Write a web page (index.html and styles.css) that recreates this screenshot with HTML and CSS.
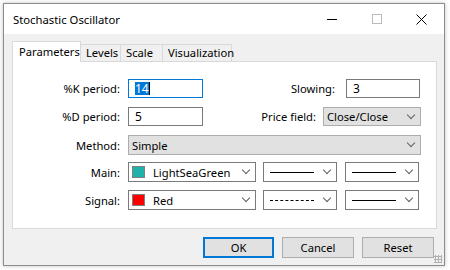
FILE: index.html
```html
<!DOCTYPE html>
<html lang="en">
<head>
    <meta charset="UTF-8">
    <title>Stochastic Oscillator</title>
    <link rel="stylesheet" href="styles.css">
</head>
<body>
    <!-- Dialog window -->
    <div class="dialog">
        <div class="titlebar">
            <span class="title">Stochastic Oscillator</span>
            <div class="win-btn">
                <svg width="10" height="10" viewBox="0 0 10 10"><line x1="0" y1="5.5" x2="10" y2="5.5" stroke="#000" stroke-width="1"/></svg>
            </div>
            <div class="win-btn">
                <svg width="10" height="10" viewBox="0 0 10 10"><rect x="0.5" y="0.5" width="9" height="9" fill="none" stroke="#bbb" stroke-width="1"/></svg>
            </div>
            <div class="win-btn close">
                <svg width="11" height="11" viewBox="0 0 11 11"><path d="M0.5 0.5 L10.5 10.5 M10.5 0.5 L0.5 10.5" stroke="#000" stroke-width="1"/></svg>
            </div>
        </div>

        <div class="content">
            <!-- Tabs -->
            <div class="tabs">
                <div class="tab active">Parameters</div>
                <div class="tab tab-levels">Levels</div>
                <div class="tab tab-scale">Scale</div>
                <div class="tab tab-vis">Visualization</div>
            </div>

            <div class="panel">
                <div class="row">
                    <label class="lbl">%K period:</label>
                    <div class="field focus w75"><span class="sel">14</span><span class="caret"></span></div>
                    <label class="lbl2 slow">Slowing:</label>
                    <div class="field w74">3</div>
                </div>

                <div class="row">
                    <label class="lbl">%D period:</label>
                    <div class="field w75">5</div>
                    <label class="lbl2 price">Price field:</label>
                    <div class="combo w98"><span class="ctext">Close/Close</span><span class="arrow"></span></div>
                </div>

                <div class="row tall">
                    <label class="lbl">Method:</label>
                    <div class="combo w293"><span class="ctext">Simple</span><span class="arrow"></span></div>
                </div>

                <div class="row tall main">
                    <label class="lbl">Main:</label>
                    <div class="drop w128">
                        <span class="swatch sea"></span><span class="ctext">LightSeaGreen</span><span class="arrow"></span>
                    </div>
                    <div class="drop w74 gap7">
                        <span class="line solid"></span><span class="arrow"></span>
                    </div>
                    <div class="drop w74 gap8">
                        <span class="line solid"></span><span class="arrow"></span>
                    </div>
                </div>

                <div class="row tall signal">
                    <label class="lbl">Signal:</label>
                    <div class="drop w128">
                        <span class="swatch red"></span><span class="ctext">Red</span><span class="arrow"></span>
                    </div>
                    <div class="drop w74 gap7">
                        <span class="line dashed"></span><span class="arrow"></span>
                    </div>
                    <div class="drop w74 gap8">
                        <span class="line solid"></span><span class="arrow"></span>
                    </div>
                </div>
            </div>

            <!-- Bottom buttons -->
            <div class="buttons">
                <button class="btn default">OK</button>
                <button class="btn">Cancel</button>
                <button class="btn">Reset</button>
            </div>
            <div class="grip"></div>
        </div>
    </div>
</body>
</html>
```

FILE: styles.css
```css
/* Page behind the dialog */
body {
    margin: 0;
    width: 450px;
    height: 270px;
    overflow: hidden;
    background: #fff;
    font-family: "Noto Sans", "Open Sans", sans-serif;
    font-size: 11.2px;
    color: #000;
}

/* Window frame */
.dialog {
    margin: 3px 0 0 3px;
    width: 440px;
    height: 261px;
    border: 1px solid #8c8c8c;
    box-shadow: 0 0 4px rgba(0, 0, 0, 0.25);
    background: #f0f0f0;
    display: flex;
    flex-direction: column;
}

.titlebar {
    height: 30px;
    background: #fff;
    display: flex;
    align-items: center;
}

.title {
    flex: 1;
    padding-left: 9px;
    font-size: 11.3px;
}

.win-btn {
    width: 45px;
    height: 30px;
    display: flex;
    align-items: center;
    justify-content: center;
}

.content {
    position: relative;
    flex: 1;
    padding: 7px 7px 0 8px;
}

/* Tabs */
.tabs {
    display: flex;
    align-items: flex-end;
    height: 20px;
}

.tab {
    height: 17px;
    line-height: 16px;
    padding: 0 5px;
    border: 1px solid #d9d9d9;
    border-bottom: none;
    border-left: none;
    box-sizing: border-box;
    background: #f0f0f0;
}

.tab.active {
    width: 69px;
    height: 21px;
    line-height: 20px;
    padding: 0 6px;
    border-left: 1px solid #d9d9d9;
    background: #fff;
    position: relative;
    top: 1px;
    z-index: 1;
}

.tab-levels { width: 40px; }
.tab-scale { width: 42px; }
.tab-vis { width: 69px; }

.panel {
    background: #fff;
    border: 1px solid #d9d9d9;
    box-sizing: border-box;
    height: 168px;
    padding-top: 17px;
}

/* Form rows */
.row {
    display: flex;
    align-items: center;
    height: 19px;
    margin-bottom: 9px;
}

.row.tall {
    height: 20px;
}

.row.main {
    margin-top: -2px;
    margin-bottom: 8px;
}

.lbl {
    width: 107px;
    text-align: right;
    margin-right: 8px;
}

.lbl2 {
    text-align: right;
}

.lbl2.slow {
    width: 132px;
    margin-right: 11px;
}

.lbl2.price {
    width: 113px;
    margin-right: 7px;
}

.field {
    height: 19px;
    box-sizing: border-box;
    border: 1px solid #7a7a7a;
    padding-left: 6px;
    line-height: 17px;
    display: flex;
    align-items: center;
    font-size: 12px;
}

.field.focus {
    border-color: #0078d7;
}

.sel {
    background: #0078d7;
    color: #fff;
    line-height: 13px;
}

.caret {
    width: 1px;
    height: 13px;
    background: #000;
}

.combo, .drop {
    position: relative;
    height: 20px;
    box-sizing: border-box;
    border: 1px solid #adadad;
    background: #e1e1e1;
    display: flex;
    align-items: center;
    padding-left: 3px;
}

.combo {
    height: 19px;
}

.row.tall .combo {
    height: 20px;
}

.drop {
    background: #fff;
    border-color: #7a7a7a;
}

.arrow {
    position: absolute;
    right: 6px;
    top: 50%;
    width: 5px;
    height: 5px;
    margin-top: -5px;
    border-right: 1px solid #606060;
    border-bottom: 1px solid #606060;
    transform: rotate(45deg);
}

.w74 { width: 74px; }
.w75 { width: 75px; }
.w98 { width: 98px; }
.w128 { width: 128px; }
.w293 { width: 293px; }
.gap7 { margin-left: 7px; }
.gap8 { margin-left: 8px; }

.swatch {
    width: 13px;
    height: 12px;
    box-sizing: border-box;
    border: 1px solid #808080;
    margin-right: 8px;
}

.sea { background: #20b2aa; }
.red { background: #ff0000; }

.line {
    width: 44px;
    margin-left: 3px;
    height: 0;
}

.line.solid {
    border-top: 1px solid #000;
}

.line.dashed {
    border-top: 1px dashed #000;
}

/* Buttons */
.buttons {
    display: flex;
    justify-content: flex-end;
    gap: 8px;
    margin-top: 8px;
    padding-right: 3px;
}

.btn {
    height: 21px;
    width: 72px;
    font-family: inherit;
    font-size: 11.2px;
    background: #e1e1e1;
    border: 1px solid #adadad;
    padding: 0;
    color: #000;
}

.btn.default {
    width: 71px;
    border: 2px solid #0078d7;
}

.grip {
    position: absolute;
    right: 2px;
    bottom: 2px;
    width: 8px;
    height: 8px;
    background: radial-gradient(circle, #b0b0b0 1px, transparent 1.2px) 0 0 / 3px 3px;
}
```
